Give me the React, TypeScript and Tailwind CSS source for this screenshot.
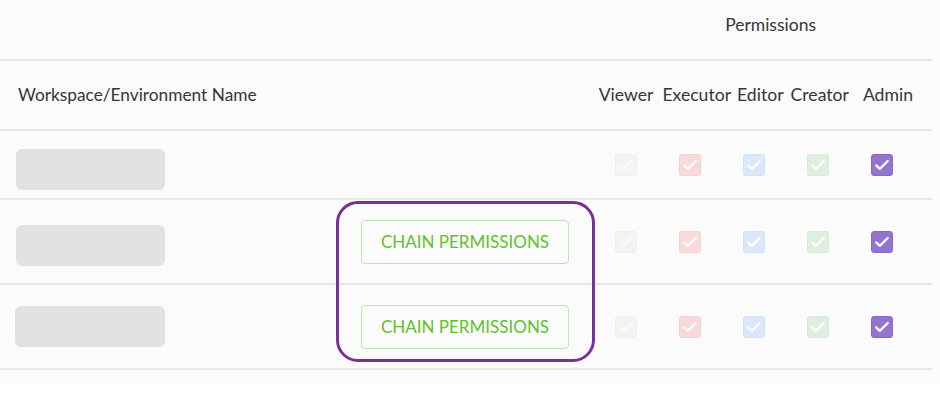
const roles = [
  { key: "viewer", box: "bg-[#f3f3f3] border-[#efefef]", check: "#fafafa" },
  { key: "executor", box: "bg-[#f9d9d9] border-[#f5d2d2]", check: "#ffffff" },
  { key: "editor", box: "bg-[#d9e8fb] border-[#d2e3f8]", check: "#ffffff" },
  { key: "creator", box: "bg-[#ddefdf] border-[#d6ead8]", check: "#ffffff" },
  { key: "admin", box: "bg-[#9574cf] border-[#8a68c6]", check: "#ffffff" },
];

function CheckBox({ box, check }: { box: string; check: string }) {
  return (
    <div className={`flex h-[22px] w-[22px] items-center justify-center rounded-[3px] border ${box}`}>
      <svg width="20" height="20" viewBox="0 0 20 20" fill="none">
        <path d="M4.2 10.4l3.6 3.5L15.8 6" stroke={check} strokeWidth="2.2" strokeLinecap="round" strokeLinejoin="round" />
      </svg>
    </div>
  );
}

function Checks() {
  return (
    <div className="flex">
      {roles.map((r) => (
        <div key={r.key} className="flex w-[64px] justify-center">
          <CheckBox box={r.box} check={r.check} />
        </div>
      ))}
    </div>
  );
}

function Skeleton({ offset = "" }: { offset?: string }) {
  return <div className={`h-[41px] w-[149px] rounded-[6px] bg-[#e2e2e2] ${offset}`} />;
}

function ChainButton() {
  return (
    <button className="flex h-[44px] w-[208px] items-center justify-center rounded-[4px] border border-[#bde8a8] bg-transparent text-[17px] text-[#5fc22a]">
      CHAIN PERMISSIONS
    </button>
  );
}

export default function App() {
  return (
    <div className="min-h-screen bg-white font-['Lato','Open_Sans',sans-serif] text-[#363636]">
      <div className="relative bg-[#fbfbfb] pb-[14px]">
        <div className="mr-[8px]">
          <div className="flex h-[61px] items-center justify-end border-b-2 border-[#e6e6e6] pr-[116px] pb-[8px] text-[17.5px]">
            Permissions
          </div>
          <div className="flex h-[70px] items-center border-b-2 border-[#e6e6e6]">
            <div className="flex-1 pl-[18px] text-[17.3px]">Workspace/Environment Name</div>
            <div className="flex pr-[19px] text-[17.6px]">
              <span>Viewer</span>
              <span className="ml-[9px]">Executor</span>
              <span className="ml-[6px]">Editor</span>
              <span className="ml-[7px]">Creator</span>
              <span className="ml-[14px]">Admin</span>
            </div>
          </div>
          <div className="flex h-[69px] items-center border-b-2 border-[#e6e6e6]">
            <Skeleton offset="ml-[16px] mt-[10px]" />
            <div className="flex-1" />
            <div className="pr-[18px]">
              <Checks />
            </div>
          </div>
          <div className="flex h-[85px] items-center border-b-2 border-[#e6e6e6]">
            <Skeleton offset="ml-[16px] mt-[8px]" />
            <div className="ml-[196px]">
              <ChainButton />
            </div>
            <div className="flex-1" />
            <div className="pr-[18px]">
              <Checks />
            </div>
          </div>
          <div className="flex h-[85px] items-center border-b-2 border-[#e6e6e6]">
            <Skeleton offset="ml-[15px] w-[150px]" />
            <div className="ml-[196px]">
              <ChainButton />
            </div>
            <div className="flex-1" />
            <div className="pr-[18px]">
              <Checks />
            </div>
          </div>
        </div>
        <div className="pointer-events-none absolute left-[336px] top-[201px] h-[161px] w-[259px] rounded-[22px] border-[3px] border-[#7d2f97]" />
      </div>
    </div>
  );
}
